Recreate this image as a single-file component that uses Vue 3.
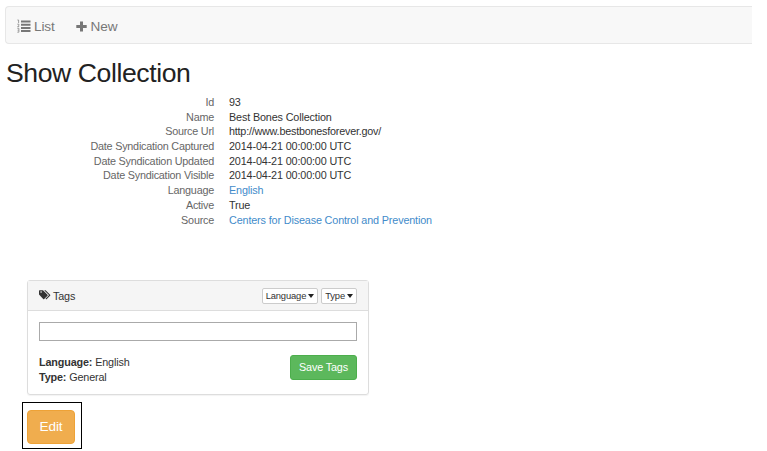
<script setup>
const rows = [
  { label: 'Id', value: '93' },
  { label: 'Name', value: 'Best Bones Collection' },
  { label: 'Source Url', value: 'http://www.bestbonesforever.gov/', tight: true },
  { label: 'Date Syndication Captured', value: '2014-04-21 00:00:00 UTC' },
  { label: 'Date Syndication Updated', value: '2014-04-21 00:00:00 UTC' },
  { label: 'Date Syndication Visible', value: '2014-04-21 00:00:00 UTC' },
  { label: 'Language', value: 'English', link: true },
  { label: 'Active', value: 'True' },
  { label: 'Source', value: 'Centers for Disease Control and Prevention', link: true },
]
const filters = ['Language', 'Type']
const tags = [
  { name: 'Language', value: 'English' },
  { name: 'Type', value: 'General' },
]
</script>

<template>
  <main class="page">
    <nav class="navbar">
      <a class="nav-item list-item">
        <svg class="list-icon" width="14" height="14" viewBox="0 0 14 14">
          <path d="M4 1.5h9.5v2H4zM4 4.7h9.5v2H4zM4 7.9h9.5v2H4zM4 11.1h9.5v2H4z" fill="#777" />
          <path d="M.4 1h1.2v3M.3 5.2h1.6v1.3L.6 7.6h1.6M.3 9.3h1.6v3.9H.3M.6 11.2h1.2" fill="none" stroke="#888" stroke-width=".8" />
        </svg>
        <span>List</span>
      </a>
      <a class="nav-item">
        <svg class="plus-icon" width="11" height="11" viewBox="0 0 11 11">
          <path d="M4 .5h3V4h3.7v3H7v3.5H4V7H.3V4H4z" fill="#777" />
        </svg>
        <span>New</span>
      </a>
    </nav>

    <h1>Show Collection</h1>

    <dl class="details">
      <template v-for="row in rows" :key="row.label">
        <dt>{{ row.label }}</dt>
        <dd :class="{ link: row.link, tight: row.tight }">{{ row.value }}</dd>
      </template>
    </dl>

    <section class="panel">
      <header class="panel-head">
        <svg class="tags-icon" width="12" height="10" viewBox="0 0 12 10">
          <path d="M0 .8Q0 .2.6.2H4L8.5 4.7Q9 5.2 8.5 5.7L5.2 9Q4.7 9.5 4.2 9L0 4.6zM1.3 2a.8.8 0 1 0 1.6 0a.8.8 0 1 0-1.6 0z" fill="#333" fill-rule="evenodd" />
          <path d="M5.2.2h1.4l4.5 4.5q.5.5 0 1L7.8 9q-.5.5-1 .1l-.3-.3 3.2-3.2q.4-.4 0-.9z" fill="#333" />
        </svg>
        <span class="panel-title">Tags</span>
        <button v-for="filter in filters" :key="filter" class="filter">
          <span>{{ filter }}</span><i class="caret"></i>
        </button>
      </header>
      <div class="panel-body">
        <input class="tag-input" type="text" aria-label="Tags" />
        <div class="tag-row">
          <div class="tag-list">
            <div v-for="tag in tags" :key="tag.name"><b>{{ tag.name }}:</b> {{ tag.value }}</div>
          </div>
          <button class="save">Save Tags</button>
        </div>
      </div>
    </section>

    <div class="edit-frame">
      <button class="edit">Edit</button>
    </div>
  </main>
</template>

<style>
body {
  margin: 0;
  background: #fff;
}
</style>

<style scoped>
* {
  box-sizing: border-box;
}
.page {
  width: 767px;
  height: 451px;
  overflow: hidden;
  padding: 6px 0 0 5px;
  font-family: "Liberation Sans", Arial, sans-serif;
  font-size: 10.8px;
  letter-spacing: -0.14px;
  line-height: 14.65px;
  color: #333;
}
button {
  font-family: inherit;
  letter-spacing: inherit;
  margin: 0;
  display: flex;
  align-items: center;
  justify-content: center;
  white-space: nowrap;
}
.navbar {
  width: 747px;
  height: 38px;
  border: 1px solid #e7e7e7;
  border-right: 0;
  border-radius: 4px 0 0 4px;
  background: #f8f8f8;
  display: flex;
  align-items: center;
  gap: 21px;
  padding: 4px 0 0 11px;
  font-size: 13.6px;
  color: #777;
}
.nav-item {
  display: flex;
  align-items: center;
}
.list-icon {
  margin: 0 3px 2px 0;
}
.plus-icon {
  margin: 0 4px 2px 0;
}
h1 {
  margin: 14px 0 0 1px;
  font-size: 26.6px;
  letter-spacing: -0.42px;
  font-weight: 400;
  line-height: 30px;
  color: #222;
}
.details {
  margin: 7px 0 0;
  display: grid;
  grid-template-columns: 209px 1fr;
  column-gap: 15px;
  grid-auto-rows: 14.7px;
}
dt {
  text-align: right;
  letter-spacing: -0.22px;
  color: #666;
}
dd {
  margin: 0;
}
.tight {
  letter-spacing: -0.22px;
}
.link {
  color: #428bca;
}
.panel {
  width: 342px;
  height: 115px;
  margin: 52.7px 0 0 22px;
  border: 1px solid #ddd;
  border-radius: 3px;
  box-shadow: 0 1px 1px rgba(0, 0, 0, 0.05);
}
.panel-head {
  height: 30px;
  background: #f5f5f5;
  border-bottom: 1px solid #ddd;
  display: flex;
  align-items: center;
  padding: 1px 11px 0;
}
.tags-icon {
  margin-bottom: 2px;
}
.panel-title {
  margin: 0 auto 0 2px;
}
.filter {
  height: 16px;
  margin-left: 3px;
  padding: 0 3px;
  border: 1px solid #ccc;
  border-radius: 2px;
  background: #fff;
  color: #333;
  font-size: 9.4px;
}
.caret {
  margin-left: 2px;
  border: 3px solid transparent;
  border-top: 4px solid #222;
  border-bottom: 0;
}
.panel-body {
  padding: 11px 11px 0;
}
.tag-input {
  display: block;
  width: 318px;
  height: 19px;
  border: 1px solid #aaa;
  border-radius: 0;
  background: #fff;
}
.tag-row {
  display: flex;
  justify-content: space-between;
  margin-top: 14px;
}
.save {
  width: 67px;
  height: 25px;
  border: 1px solid #4cae4c;
  border-radius: 3px;
  background: #5cb85c;
  color: #fff;
  font-size: 10.8px;
}
.edit-frame {
  width: 60px;
  height: 47px;
  margin: 7px 0 0 17px;
  border: 1px solid #000;
  padding: 7px 0 0 4px;
}
.edit {
  width: 48px;
  height: 34px;
  border: 1px solid #eea236;
  border-radius: 4px;
  background: #f0ad4e;
  color: #fff;
  font-size: 13.6px;
}
</style>
